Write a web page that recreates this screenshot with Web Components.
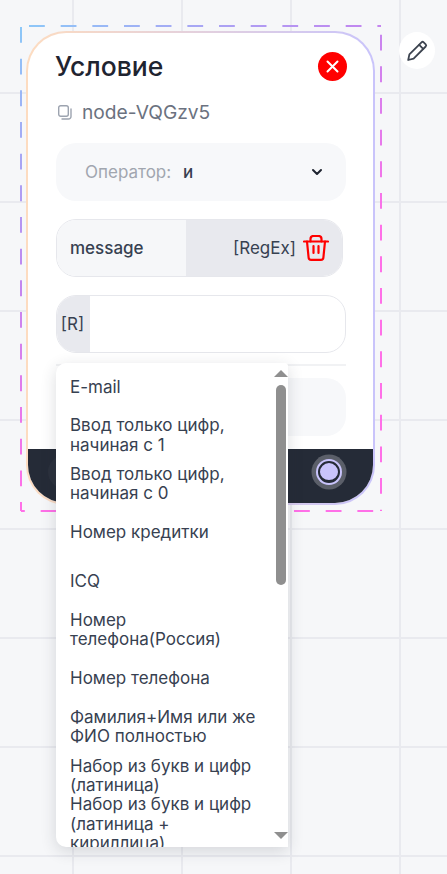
<!DOCTYPE html>
<html lang="ru">
<head>
<meta charset="utf-8">
<title>Условие</title>
<style>
  html, body { margin: 0; height: 100%; overflow: hidden; }
  body { font-family: Inter, "Liberation Sans", sans-serif; }
</style>
</head>
<body>
<flow-canvas>
  <node-selection>
    <condition-node title="Условие" node-id="node-VQGzv5">
      <option-list>
        <option-item>E-mail</option-item>
        <option-item>Ввод только цифр, начиная с 1</option-item>
        <option-item>Ввод только цифр, начиная с 0</option-item>
        <option-item>Номер кредитки</option-item>
        <option-item>ICQ</option-item>
        <option-item>Номер телефона(Россия)</option-item>
        <option-item>Номер телефона</option-item>
        <option-item>Фамилия+Имя или же ФИО полностью</option-item>
        <option-item>Набор из букв и цифр (латиница)</option-item>
        <option-item>Набор из букв и цифр (латиница + кириллица)</option-item>
      </option-list>
    </condition-node>
  </node-selection>
  <edit-button></edit-button>
</flow-canvas>

<script>
class FlowCanvas extends HTMLElement {
    connectedCallback() {
        this.attachShadow({ mode: 'open' });
        this.shadowRoot.innerHTML = `
            <style>
                :host {
                    display: block;
                    position: relative;
                    width: 447px;
                    height: 874px;
                    overflow: hidden;
                    background-color: #f6f7f9;
                    background-image:
                        linear-gradient(#e9eaef 2px, transparent 2px),
                        linear-gradient(90deg, #e9eaef 2px, transparent 2px);
                    background-size: 109px 109px;
                    background-position: 72px 92px;
                }
            </style>
            <slot></slot>
        `;
    }
}

class NodeSelection extends HTMLElement {
    connectedCallback() {
        this.attachShadow({ mode: 'open' });
        this.shadowRoot.innerHTML = `
            <style>
                :host {
                    display: block;
                    position: absolute;
                    left: 20px;
                    top: 25px;
                    width: 362px;
                    height: 487px;
                    box-sizing: border-box;
                    padding: 6px;
                }
                svg {
                    position: absolute;
                    left: 0;
                    top: 0;
                }
                line {
                    stroke: url(#dash);
                    stroke-width: 2;
                    stroke-dasharray: 15.8 15.87;
                }
            </style>
            <svg width="362" height="487" viewBox="0 0 362 487" fill="none">
                <defs>
                    <linearGradient id="dash" gradientUnits="userSpaceOnUse" x1="1" y1="1" x2="361" y2="486">
                        <stop offset="0" stop-color="#8cc8f8"/>
                        <stop offset=".33" stop-color="#c088f0"/>
                        <stop offset=".62" stop-color="#ff70e8"/>
                        <stop offset="1" stop-color="#ff70e8"/>
                    </linearGradient>
                </defs>
                <line x1="1" y1="2" x2="1" y2="486"/>
                <line x1="9" y1="1" x2="361" y2="1"/>
                <line x1="361" y1="1" x2="361" y2="486" stroke-dashoffset="23"/>
                <line x1="1" y1="486" x2="361" y2="486" stroke-dashoffset="12"/>
            </svg>
            <slot></slot>
        `;
    }
}

class ConditionNode extends HTMLElement {
    connectedCallback() {
        const title = this.getAttribute('title') || '';
        const nodeId = this.getAttribute('node-id') || '';

        this.attachShadow({ mode: 'open' });
        this.shadowRoot.innerHTML = `
            <style>
                :host {
                    display: block;
                    position: relative;
                    width: 349px;
                    height: 474px;
                }
                .card {
                    box-sizing: border-box;
                    width: 100%;
                    height: 100%;
                    display: flex;
                    flex-direction: column;
                    border: 2px solid transparent;
                    border-radius: 40px;
                    background:
                        linear-gradient(#fff, #fff) padding-box,
                        linear-gradient(90deg, #fddcc0, #c9c4fb) border-box;
                    overflow: hidden;
                }
                .body {
                    flex: 1;
                    padding: 0 27px 0 28px;
                    display: flex;
                    flex-direction: column;
                }
                .head {
                    display: flex;
                    align-items: center;
                    justify-content: space-between;
                    height: 40px;
                    margin-top: 13px;
                }
                h2 {
                    margin: 0 0 0 -1px;
                    font-size: 26.5px;
                    font-weight: 500;
                    color: #1f2430;
                }
                .close {
                    width: 29px;
                    height: 29px;
                    margin-right: -1px;
                    border-radius: 50%;
                    background: #ff0000;
                    display: flex;
                    align-items: center;
                    justify-content: center;
                }
                .id {
                    display: flex;
                    align-items: center;
                    gap: 10px;
                    margin-top: 14px;
                    height: 24px;
                    padding-left: 2px;
                    font-size: 19.2px;
                    color: #6b7280;
                }
                .select {
                    display: flex;
                    align-items: center;
                    height: 58px;
                    margin-top: 19px;
                    padding: 0 23px 0 29px;
                    border-radius: 20px;
                    background: #f7f8fa;
                    font-size: 17px;
                }
                .select .label { color: #a1a6af; width: 98px; }
                .select .value { color: #374151; font-weight: 500; flex: 1; }
                .field {
                    display: flex;
                    box-sizing: border-box;
                    height: 58px;
                    margin-top: 18px;
                    margin-right: 3px;
                    border: 1px solid #e6e7ec;
                    border-radius: 20px;
                    overflow: hidden;
                    font-size: 17px;
                    color: #374151;
                }
                .name {
                    box-sizing: border-box;
                    width: 129px;
                    padding-left: 13px;
                    display: flex;
                    align-items: center;
                    background: #f6f7f9;
                    font-weight: 450;
                }
                .type {
                    flex: 1;
                    display: flex;
                    align-items: center;
                    justify-content: flex-end;
                    gap: 7px;
                    padding-right: 13px;
                    background: #e8e9ee;
                }
                .field.input {
                    margin-right: 0;
                    background: #fff;
                }
                .prefix {
                    box-sizing: border-box;
                    width: 33px;
                    padding-right: 2px;
                    display: flex;
                    align-items: center;
                    justify-content: center;
                    background: #e8e9ee;
                    white-space: nowrap;
                }
                .rule {
                    height: 2px;
                    margin-top: 11px;
                    background: #f1f2f4;
                }
                .next {
                    height: 58px;
                    margin-top: 12px;
                    border-radius: 20px;
                    background: #f7f8fa;
                }
                .footer {
                    box-sizing: border-box;
                    position: relative;
                    height: 54px;
                    background: #252b37;
                    display: flex;
                    align-items: center;
                    justify-content: flex-end;
                    padding: 0 33px 8px 0;
                    flex-shrink: 0;
                }
                .glow {
                    position: absolute;
                    left: 20px;
                    top: 6px;
                    width: 34px;
                    height: 34px;
                    border-radius: 50%;
                    background: #2b313d;
                }
                .port {
                    box-sizing: border-box;
                    width: 22px;
                    height: 22px;
                    border-radius: 50%;
                    background: #c9c4fb;
                    border: 2px solid #252b37;
                    border-bottom-width: 3px;
                    box-shadow: 0 0 0 2px #c9c4fb, 0 0 0 6.5px #5b5f69;
                }
                ::slotted(option-list) {
                    position: absolute;
                    left: 30px;
                    top: 332px;
                }
            </style>
            <div class="card">
                <div class="body">
                    <div class="head">
                        <h2>${title}</h2>
                        <div class="close">
                            <svg width="15" height="15" viewBox="0 0 15 15" fill="none" stroke="#fff" stroke-width="2" stroke-linecap="round">
                                <path d="M2.5 2.5l10 10M12.5 2.5l-10 10"/>
                            </svg>
                        </div>
                    </div>
                    <div class="id">
                        <svg width="14" height="16" viewBox="0 0 14 16" fill="none" stroke="#9ca3af" stroke-width="1.4">
                            <rect x=".7" y="1.7" width="9.6" height="10.6" rx="2"/>
                            <path d="M13 5v7.5a2.5 2.5 0 0 1-2.5 2.5H4" stroke-linecap="round"/>
                        </svg>
                        <span>${nodeId}</span>
                    </div>
                    <div class="select">
                        <span class="label">Оператор:</span>
                        <span class="value">и</span>
                        <svg width="12" height="8" viewBox="0 0 12 8" fill="none" stroke="#1f2430" stroke-width="2" stroke-linecap="round" stroke-linejoin="round">
                            <path d="M2 2l4 4 4-4"/>
                        </svg>
                    </div>
                    <div class="field">
                        <div class="name">message</div>
                        <div class="type">
                            <span>[RegEx]</span>
                            <svg width="26" height="26" viewBox="0 0 26 26" fill="none" stroke="#ff0000" stroke-width="2.2" stroke-linecap="round" stroke-linejoin="round">
                                <path d="M1 6.5h24"/>
                                <path d="M7.5 6.5V4a3 3 0 0 1 3-3h5a3 3 0 0 1 3 3v2.5"/>
                                <path d="M4 6.5l1.6 16a2.5 2.5 0 0 0 2.5 2.4h9.8a2.5 2.5 0 0 0 2.5-2.4L22 6.5"/>
                                <path d="M10.5 11v7M15.5 11v7"/>
                            </svg>
                        </div>
                    </div>
                    <div class="field input">
                        <div class="prefix">[R]</div>
                    </div>
                    <div class="rule"></div>
                    <div class="next"></div>
                </div>
                <div class="footer"><div class="glow"></div><div class="port"></div></div>
            </div>
            <slot></slot>
        `;
    }
}

class OptionList extends HTMLElement {
    connectedCallback() {
        this.attachShadow({ mode: 'open' });
        this.shadowRoot.innerHTML = `
            <style>
                :host {
                    display: flex;
                    width: 232px;
                    height: 484px;
                    border-radius: 10px 4px 0 10px;
                    background: #fff;
                    box-shadow: 0 4px 16px rgba(37, 43, 55, 0.16);
                    overflow: hidden;
                }
                .items {
                    flex: 1;
                    min-width: 0;
                    height: 484px;
                    overflow: hidden;
                }
                .bar {
                    width: 15px;
                    height: 100%;
                    flex-shrink: 0;
                    display: flex;
                    flex-direction: column;
                    align-items: center;
                    background: #fff;
                }
                .arrow {
                    width: 0;
                    height: 0;
                    border-left: 7px solid transparent;
                    border-right: 7px solid transparent;
                    margin-top: 7px;
                }
                .up { border-bottom: 7px solid #8f8f8f; }
                .down { border-top: 7px solid #8f8f8f; margin-top: auto; margin-bottom: 8px; }
                .thumb {
                    width: 10px;
                    height: 200px;
                    margin-top: 8px;
                    border-radius: 5px;
                    background: #8f8f8f;
                }
            </style>
            <div class="items"><slot></slot></div>
            <div class="bar">
                <div class="arrow up"></div>
                <div class="thumb"></div>
                <div class="arrow down"></div>
            </div>
        `;
    }
}

class OptionItem extends HTMLElement {
    connectedCallback() {
        this.attachShadow({ mode: 'open' });
        this.shadowRoot.innerHTML = `
            <style>
                :host {
                    display: flex;
                    align-items: center;
                    box-sizing: border-box;
                    height: 48.6px;
                    padding: 0 14px;
                    font-size: 17px;
                    line-height: 19.5px;
                    color: #374151;
                }
                div { width: 188px; flex-shrink: 0; }
            </style>
            <div><slot></slot></div>
        `;
    }
}

class EditButton extends HTMLElement {
    connectedCallback() {
        this.attachShadow({ mode: 'open' });
        this.shadowRoot.innerHTML = `
            <style>
                :host {
                    display: flex;
                    align-items: center;
                    justify-content: center;
                    position: absolute;
                    left: 399px;
                    top: 32px;
                    width: 36px;
                    height: 37px;
                    border-radius: 50%;
                    background: #fff;
                }
            </style>
            <svg width="22" height="22" viewBox="0 0 22 22" fill="none" stroke="#3d4450" stroke-width="1.8" stroke-linecap="round" stroke-linejoin="round">
                <path d="M15.5 2.3a1.6 1.6 0 0 1 2.2 0l2 2a1.6 1.6 0 0 1 0 2.2L7.6 18.6 2.2 20l1.2-5.6z"/>
                <path d="M13.2 4.8l4 4"/>
            </svg>
        `;
    }
}

customElements.define('flow-canvas', FlowCanvas);
customElements.define('node-selection', NodeSelection);
customElements.define('condition-node', ConditionNode);
customElements.define('option-list', OptionList);
customElements.define('option-item', OptionItem);
customElements.define('edit-button', EditButton);
</script>
</body>
</html>
